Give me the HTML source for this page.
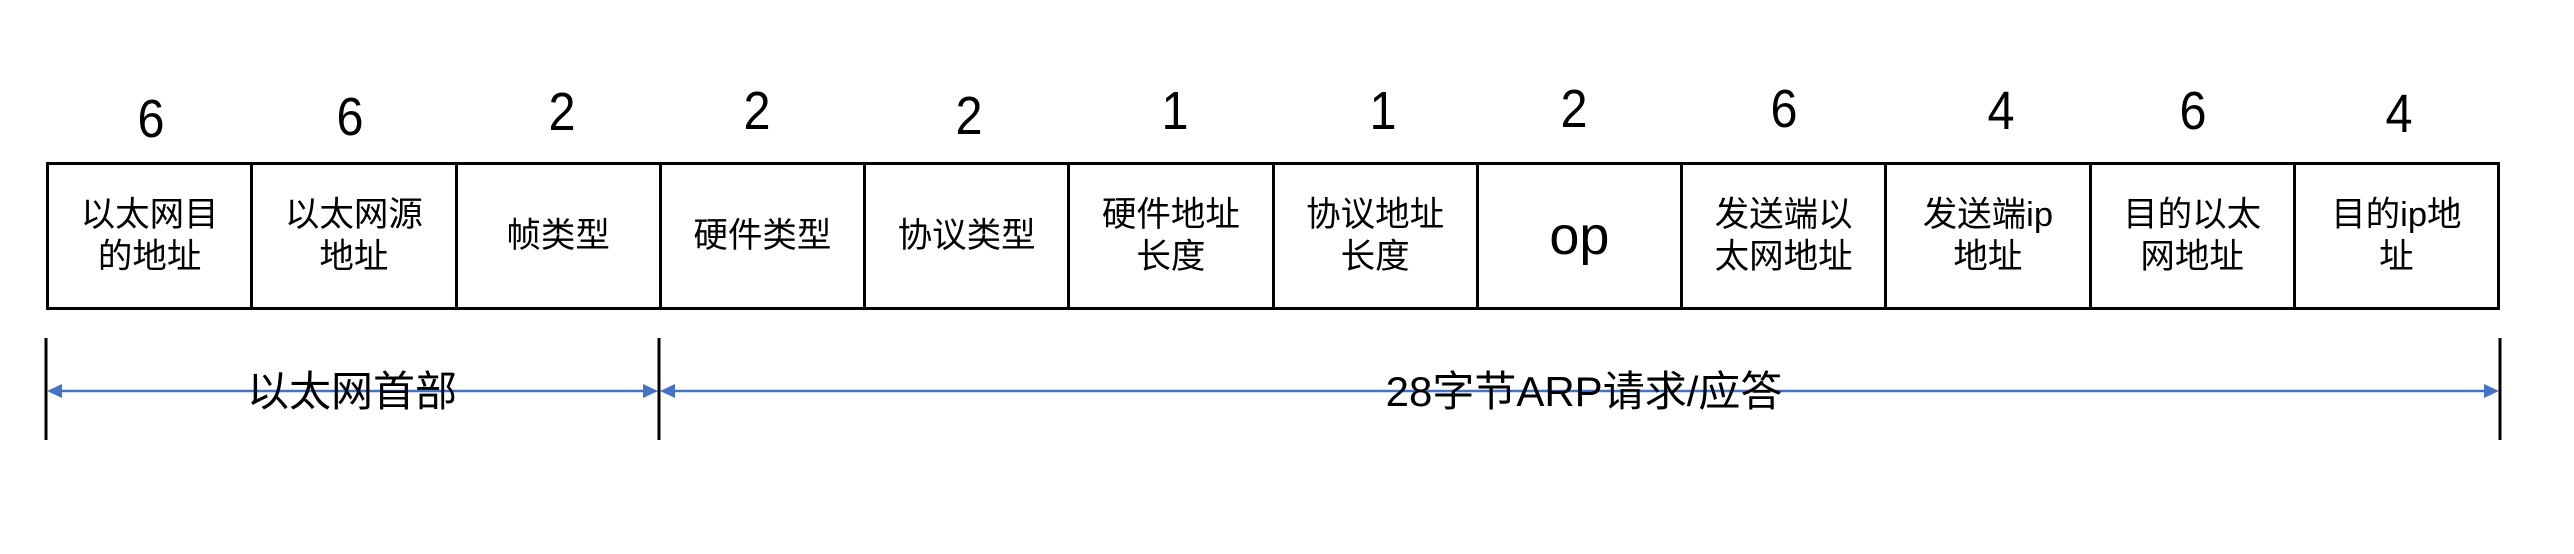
<!DOCTYPE html>
<html><head><meta charset="utf-8"><style>
html,body{margin:0;padding:0;background:#fff;}
body{width:2574px;height:554px;position:relative;overflow:hidden;font-family:"Liberation Sans","Noto Sans CJK SC",sans-serif;color:#000;}
.d{position:absolute;font-size:54px;line-height:54px;width:80px;margin-left:-40px;text-align:center;transform:scaleX(0.9);}
.box{position:absolute;left:46px;top:162px;width:2454px;height:148px;border:3px solid #000;box-sizing:border-box;display:flex;}
.c{flex:1;border-right:3px solid #000;display:flex;align-items:center;justify-content:center;text-align:center;font-size:34.5px;line-height:42px;}
.c:last-child{border-right:none;}
.lbl{position:absolute;font-size:42px;line-height:42px;white-space:nowrap;transform:translateX(-50%);}
</style></head><body>
<div class="d" style="left:151px;top:92px">6</div>
<div class="d" style="left:350px;top:90px">6</div>
<div class="d" style="left:562px;top:85px">2</div>
<div class="d" style="left:757px;top:84px">2</div>
<div class="d" style="left:969px;top:89px">2</div>
<div class="d" style="left:1175px;top:84px">1</div>
<div class="d" style="left:1383px;top:84px">1</div>
<div class="d" style="left:1574px;top:82px">2</div>
<div class="d" style="left:1784px;top:82px">6</div>
<div class="d" style="left:2001px;top:84px">4</div>
<div class="d" style="left:2193px;top:84px">6</div>
<div class="d" style="left:2399px;top:87px">4</div>
<div class="box">
<div class="c">以太网目<br>的地址</div>
<div class="c">以太网源<br>地址</div>
<div class="c">帧类型</div>
<div class="c">硬件类型</div>
<div class="c">协议类型</div>
<div class="c">硬件地址<br>长度</div>
<div class="c">协议地址<br>长度</div>
<div class="c" style="font-size:54px">op</div>
<div class="c">发送端以<br>太网地址</div>
<div class="c">发送端ip<br>地址</div>
<div class="c">目的以太<br>网地址</div>
<div class="c">目的ip地<br>址</div>
</div>
<svg style="position:absolute;left:0;top:0" width="2574" height="554">
<g stroke="#000" stroke-width="3">
<line x1="46" y1="338" x2="46" y2="440"/>
<line x1="659" y1="338" x2="659" y2="440"/>
<line x1="2500" y1="338" x2="2500" y2="440"/>
</g>
<g stroke="#4472c4" stroke-width="2.5">
<line x1="50" y1="391" x2="655" y2="391"/>
<line x1="663" y1="391" x2="2496" y2="391"/>
</g>
<g fill="#4472c4">
<polygon points="47,391 62,384 62,398"/>
<polygon points="658,391 643,384 643,398"/>
<polygon points="660,391 675,384 675,398"/>
<polygon points="2499,391 2484,384 2484,398"/>
</g>
</svg>
<div class="lbl" style="left:352px;top:371px">以太网首部</div>
<div class="lbl" style="left:1584px;top:371px">28字节ARP请求/应答</div>
</body></html>
